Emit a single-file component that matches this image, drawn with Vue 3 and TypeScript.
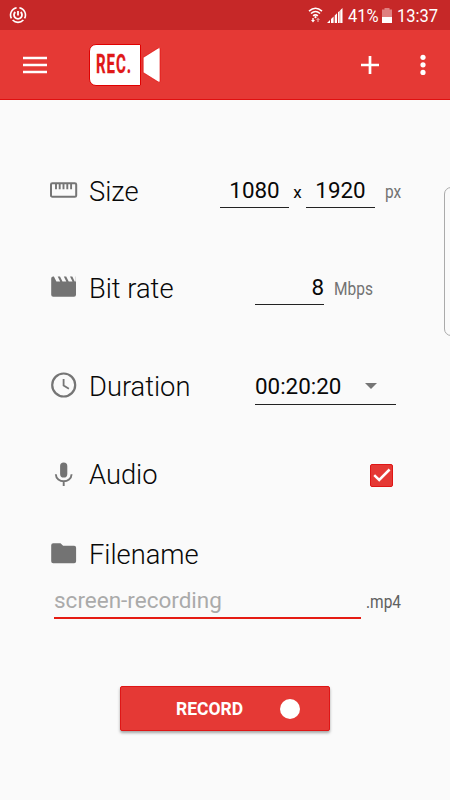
<script setup lang="ts">
import { ref } from 'vue'

const width = ref('1080')
const height = ref('1920')
const bitRate = ref('8')
const duration = ref('00:20:20')
const audio = ref(true)
const filename = ref('')
</script>

<template>
  <main class="screen">
    <header class="status">
      <svg class="status-app" width="18" height="18" viewBox="0 0 18 18" fill="none" stroke="#fff">
        <path d="M7.6 1.7A7.4 7.4 0 0 0 2.4 12.4M3.6 14A7.4 7.4 0 0 0 14.4 14M15.6 12.4A7.4 7.4 0 0 0 10.4 1.7" stroke-width="1.6" />
        <path d="M6.3 6A4 4 0 1 0 11.7 6M9 5v4.6" stroke-width="1.8" />
      </svg>
      <svg class="wifi" width="15" height="17" viewBox="0 0 15 17" fill="none" stroke="#fff">
        <path d="M1 4.1Q7.5-1.7 14 4.1M3 6.5Q7.5 2.4 12 6.5M5.1 8.9Q7.5 6.8 9.9 8.9" stroke-width="1.5" />
        <circle cx="7.5" cy="10.2" r="1.1" fill="#fff" stroke="none" />
        <path d="M3 13h1.3v-2h1.4v2H7l-2 2.6z" fill="#fff" stroke="none" />
        <path d="M8 13h1.3v2h1.4v-2H12l-2-2.6z" fill="#fff" stroke="none" opacity=".5" />
      </svg>
      <svg class="signal" width="16" height="15" viewBox="0 0 16 15" fill="#fff">
        <path d="M0 15l3-3v3zM4 11l2.6-2.4V15H4zM7.7 7.5L10 5.2V15H7.7zM11 4.3V15h1.7V2.7zM13.2 2.2L15.5 0v15h-2.3z" />
      </svg>
      <span class="status-text percent"><span class="fit">41%</span></span>
      <svg class="battery" width="10" height="15" viewBox="0 0 10 15">
        <path d="M2.5 0h5v1.5H10V9H0V1.5h2.5z" fill="#df8080" />
        <path d="M0 9h10v6H0z" fill="#fff" />
      </svg>
      <span class="status-text time"><span class="fit">13:37</span></span>
    </header>

    <nav class="toolbar">
      <svg class="menu" width="24" height="18" viewBox="0 0 24 18">
        <path d="M0 2h24M0 9h24M0 16h24" stroke="#fff" stroke-width="2.6" />
      </svg>
      <div class="logo">
        <div class="logo-body"><span class="logo-text">REC.</span></div>
        <svg width="20" height="36" viewBox="0 0 20 36">
          <path d="M1.2 10.5L16 1.2Q18-.3 18 2v32q0 2.2-2 .8L1.2 25.5z" fill="#fff" stroke="#e00000" stroke-width=".6" />
        </svg>
      </div>
      <svg class="plus" width="20" height="20" viewBox="0 0 20 20">
        <path d="M10 1v18M1 10h18" stroke="#fff" stroke-width="2.7" />
      </svg>
      <svg class="more" width="6" height="22" viewBox="0 0 6 22" fill="#fff">
        <circle cx="3" cy="3.3" r="2.6" /><circle cx="3" cy="10.8" r="2.6" /><circle cx="3" cy="18.4" r="2.6" />
      </svg>
    </nav>

    <form class="settings" @submit.prevent>
      <div class="row size">
        <svg class="icon" width="28" height="28" viewBox="0 0 28 28" fill="none" stroke="#757575">
          <rect x="1" y="6.2" width="25.2" height="13.6" rx="1.4" stroke-width="2" />
          <path d="M6 7v5.2M9.7 7v5.2M13.5 7v5.2M17.3 7v5.2M21.1 7v5.2" stroke-width="1.9" />
        </svg>
        <span class="label">Size</span>
        <input v-model="width" class="field number" aria-label="Width">
        <span class="times">x</span>
        <input v-model="height" class="field number" aria-label="Height">
        <span class="unit"><span class="fit">px</span></span>
      </div>

      <div class="row rate">
        <svg class="icon" width="28" height="28" viewBox="0 0 28 28">
          <path d="M3.2 2.5h.7l2.5 5h3.8l-2.5-5H10l2.5 5h3.8l-2.5-5h2.4l2.5 5h3.8l-2.5-5h2.3l2.4 5h1.1v-5H26v18.2q0 2-2 2H3.2q-2 0-2-2V4.5q0-2 2-2z" fill="#737373" />
        </svg>
        <span class="label">Bit rate</span>
        <input v-model="bitRate" class="field number right offset" aria-label="Bit rate value">
        <span class="unit"><span class="fit">Mbps</span></span>
      </div>

      <div class="row duration">
        <svg class="icon" width="28" height="28" viewBox="0 0 28 28" fill="none" stroke="#757575">
          <circle cx="13.7" cy="13" r="11.5" stroke-width="2.2" />
          <path d="M13.6 6.9v6.7l5.3 3.2" stroke-width="1.8" />
        </svg>
        <span class="label">Duration</span>
        <div class="field select offset">
          <span>{{ duration }}</span>
          <svg width="12" height="6" viewBox="0 0 12 6"><path d="M0 0h12L6 6z" fill="#757575" /></svg>
        </div>
      </div>

      <div class="row audio">
        <svg class="icon" width="28" height="28" viewBox="0 0 28 28">
          <rect x="10.1" y="1.5" width="7.2" height="15" rx="3.6" fill="#737373" />
          <path d="M5.8 13.2c.4 9.4 15.4 9.4 15.8 0M13.7 20v5" fill="none" stroke="#757575" stroke-width="1.9" />
        </svg>
        <span class="label">Audio</span>
        <button type="button" class="check" role="checkbox" :aria-checked="audio" @click="audio = !audio">
          <svg v-if="audio" width="18" height="14" viewBox="0 0 18 14">
            <path d="M1.2 7.2l5 4.8L16.6 1.5" fill="none" stroke="#fff" stroke-width="2.5" />
          </svg>
        </button>
      </div>

      <div class="row file">
        <svg class="icon" width="28" height="28" viewBox="0 0 28 28">
          <path d="M3.2 3.2h7.3l2.6 2.5h11q2 0 2 2v13.6q0 2-2 2H3.2q-2 0-2-2V5.2q0-2 2-2z" fill="#737373" />
        </svg>
        <span class="label">Filename</span>
      </div>

      <div class="filename">
        <input v-model="filename" placeholder="screen-recording" aria-label="Filename value">
        <span class="unit"><span class="fit">.mp4</span></span>
      </div>

      <button type="submit" class="record"><span>RECORD</span><i class="dot"></i></button>
    </form>
    <div class="edge-handle"></div>
  </main>
</template>

<style>
body {
  margin: 0;
}
</style>

<style scoped>
.screen {
  position: relative;
  box-sizing: border-box;
  width: 450px;
  height: 800px;
  overflow: hidden;
  background: #fafafa;
  color: #080808;
  font-family: Roboto, "Liberation Sans", sans-serif;
}
.screen * {
  box-sizing: border-box;
}
svg {
  display: block;
  flex: none;
}
.status {
  display: flex;
  height: 30px;
  padding-left: 9px;
  align-items: center;
  background: #c62828;
  color: #fff;
}
.wifi {
  margin-left: 281px;
}
.signal {
  margin-left: 4px;
}
.status-text {
  flex: none;
  padding-top: 1px;
  font-size: 19.2px;
  line-height: 29px;
}
.percent {
  width: 29px;
  margin-left: 5px;
}
.time {
  width: 41px;
  margin-left: 5px;
}
.battery {
  margin-left: 5px;
}
.fit {
  display: inline-block;
  transform: scaleX(.86);
  transform-origin: left;
}
.toolbar {
  display: flex;
  height: 70px;
  padding-left: 23px;
  align-items: center;
  background: #e53935;
  border-bottom: 1px solid #e01010;
}
.logo {
  display: flex;
  margin-left: 42px;
  align-items: center;
}
.logo-body {
  display: flex;
  width: 52px;
  height: 42px;
  padding-left: 6px;
  align-items: center;
  background: #fff;
  border: 1px solid #e00000;
  border-radius: 7px 1px 1px 7px;
}
.logo-text {
  color: #e01818;
  font-size: 25px;
  font-weight: 700;
  letter-spacing: 1.6px;
  line-height: 40px;
  transform: scaleX(.6);
  transform-origin: left;
  -webkit-text-stroke: .3px #e01818;
}
.logo svg {
  margin-left: 1px;
}
.plus {
  margin-left: 198px;
}
.more {
  margin-left: 39.5px;
}
.settings {
  padding-top: 42px;
}
.row {
  display: flex;
  padding-left: 50px;
  align-items: center;
}
.size {
  height: 98px;
}
.rate {
  height: 96px;
}
.duration {
  height: 100px;
}
.audio {
  height: 78px;
}
.file {
  height: 80px;
}
.icon {
  width: 28px;
}
.label {
  flex: none;
  width: 131px;
  margin-left: 11px;
  padding-top: 2px;
  font-size: 27.3px;
  font-weight: 300;
  line-height: 36px;
}
.audio .label {
  padding-top: 0;
}
.field {
  flex: none;
  height: 34px;
  padding: 0 0 2px;
  border: 0;
  border-bottom: 1px solid #222;
  outline: 0;
  background: none;
  color: #080808;
  font-family: inherit;
  font-size: 22.4px;
}
.number {
  width: 69px;
  text-align: center;
}
.right {
  text-align: right;
}
.offset {
  margin-left: 35px;
}
.times {
  width: 17px;
  padding-top: 1px;
  font-size: 17px;
  text-align: center;
}
.unit {
  margin-left: 10px;
  padding-top: 1px;
  color: #727272;
  font-size: 18px;
}
.select {
  display: flex;
  width: 141px;
  height: 37px;
  padding: 0 19px 0 0;
  align-items: center;
  justify-content: space-between;
}
.check {
  display: flex;
  width: 23px;
  height: 23px;
  margin-left: 150px;
  padding: 0;
  align-items: center;
  justify-content: center;
  border: 1px solid #df1616;
  border-radius: 2px;
  background: #e53935;
}
.filename {
  display: flex;
  height: 27px;
  margin-top: -2px;
  padding-left: 54px;
}
.filename input {
  flex: none;
  width: 307px;
  height: 27px;
  padding: 0 0 9px;
  border: 0;
  border-bottom: 2px solid #e51c13;
  outline: 0;
  background: none;
  font: 22.5px Roboto, sans-serif;
}
.filename input::placeholder {
  color: #aaa;
  opacity: 1;
}
.filename .unit {
  margin-left: 5px;
  padding-top: 0;
  color: #606060;
  line-height: 20px;
}
.record {
  display: flex;
  width: 210px;
  height: 45px;
  margin: 67px 0 0 120px;
  padding: 0 29px 0 55px;
  align-items: center;
  justify-content: space-between;
  border: 1px solid #df1616;
  border-radius: 2px;
  background: #e53935;
  box-shadow: 0 2px 3px rgb(0 0 0 / 35%);
  color: #fff;
  font: 700 17.5px Roboto, sans-serif;
}
.dot {
  width: 20px;
  height: 20px;
  border-radius: 50%;
  background: #fff;
}
.edge-handle {
  position: absolute;
  top: 187px;
  right: -8px;
  width: 14px;
  height: 149px;
  border: 1px solid #aaa;
  border-radius: 7px;
}
</style>
